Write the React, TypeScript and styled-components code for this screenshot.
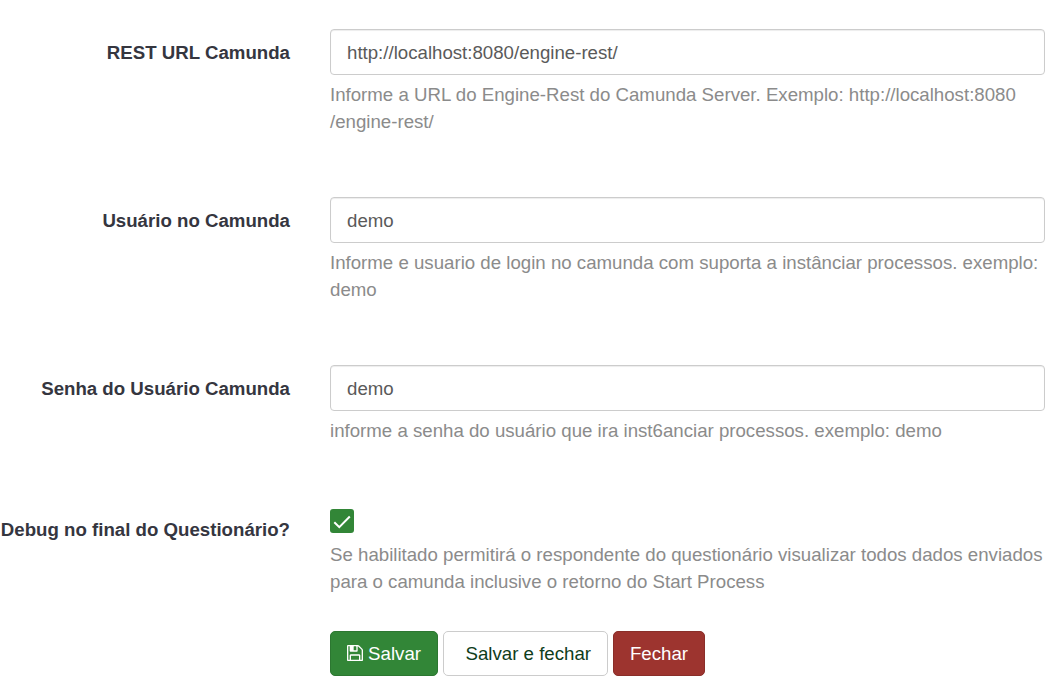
import React from "react";
import styled, { createGlobalStyle } from "styled-components";

const GlobalStyle = createGlobalStyle`
  * { box-sizing: border-box; }
  body {
    margin: 0;
    background: #fff;
    overflow: hidden;
    font-family: "Liberation Sans", Arial, sans-serif;
    font-size: 18.67px;
    line-height: 27px;
  }
`;

const Form = styled.form`
  width: 1055px;
  height: 683px;
  padding: 29px 10px 0 0;
`;

const Row = styled.div<{ $height: number }>`
  display: grid;
  grid-template-columns: 290px 715px;
  column-gap: 40px;
  height: ${(p) => p.$height}px;
  align-items: start;
`;

const Label = styled.label<{ $top?: number }>`
  padding-top: ${(p) => p.$top ?? 10}px;
  font-weight: 700;
  color: #35363f;
  text-align: right;
  white-space: nowrap;
`;

const Input = styled.input`
  display: block;
  width: 100%;
  height: 46px;
  padding: 9px 16px 7px;
  border: 1px solid #ccc;
  border-radius: 4px;
  box-shadow: inset 0 1px 1px rgba(0, 0, 0, 0.075);
  background: #fff;
  color: #5a5a5a;
  font: inherit;
  outline: none;
`;

const Help = styled.p`
  margin: 6px 0 0;
  color: #8b8b8b;
  white-space: nowrap;
`;

const CheckBox = styled.span`
  display: flex;
  width: 24px;
  height: 24px;
  margin-bottom: 8px;
  border-radius: 3px;
  background: #328637;
`;

const Actions = styled.div`
  display: flex;
  gap: 5px;
  padding-left: 330px;
`;

const variants = {
  primary: "background: #328637; border-color: #2c7731; color: #fff;",
  plain: "background: #fff; border-color: #ccc; color: #0f3d1b;",
  danger: "background: #9d342f; border-color: #8a2e29; color: #fff;",
};

const Button = styled.button<{ $variant: keyof typeof variants; $width: number }>`
  display: flex;
  align-items: center;
  justify-content: flex-end;
  width: ${(p) => p.$width}px;
  height: 45px;
  padding: 0 16px;
  border: 1px solid;
  border-radius: 5px;
  font: inherit;
  white-space: nowrap;
  ${(p) => variants[p.$variant]}
`;

const SaveIcon = styled.svg`
  flex: none;
  width: 16px;
  height: 16px;
  margin: 0 5px 1px 0;
`;

const fields = [
  {
    label: "REST URL Camunda",
    value: "http://localhost:8080/engine-rest/",
    help: ["Informe a URL do Engine-Rest do Camunda Server. Exemplo: http://localhost:8080", "/engine-rest/"],
    height: 168,
  },
  {
    label: "Usuário no Camunda",
    value: "demo",
    help: ["Informe e usuario de login no camunda com suporta a instânciar processos. exemplo:", "demo"],
    height: 168,
  },
  {
    label: "Senha do Usuário Camunda",
    value: "demo",
    help: ["informe a senha do usuário que ira inst6anciar processos. exemplo: demo"],
    height: 144,
  },
];

function HelpText({ lines }: { lines: string[] }) {
  return (
    <Help>
      {lines.map((line, i) => (
        <React.Fragment key={line}>
          {i > 0 && <br />}
          {line}
        </React.Fragment>
      ))}
    </Help>
  );
}

export default function App() {
  return (
    <Form onSubmit={(e) => e.preventDefault()}>
      <GlobalStyle />
      {fields.map((f) => (
        <Row key={f.label} $height={f.height}>
          <Label>{f.label}</Label>
          <div>
            <Input defaultValue={f.value} />
            <HelpText lines={f.help} />
          </div>
        </Row>
      ))}
      <Row $height={122}>
        <Label $top={7}>Debug no final do Questionário?</Label>
        <div>
          <CheckBox role="checkbox" aria-checked="true">
            <svg width="24" height="24" viewBox="0 0 24 24" fill="none" stroke="#fff" strokeWidth="2">
              <path d="M4.3 13.2l5 5L19.8 7.5" />
            </svg>
          </CheckBox>
          <HelpText
            lines={[
              "Se habilitado permitirá o respondente do questionário visualizar todos dados enviados",
              "para o camunda inclusive o retorno do Start Process",
            ]}
          />
        </div>
      </Row>
      <Actions>
        <Button $variant="primary" $width={108}>
          <SaveIcon viewBox="0 128 1536 1536" fill="#fff">
            <path d="M384 1536h768v-384h-768v384zM1280 1536h128v-896q0-14-10-38.5t-20-34.5l-281-281q-10-10-34-20t-39-10v416q0 40-28 68t-68 28h-576q-40 0-68-28t-28-68v-416h-128v1280h128v-416q0-40 28-68t68-28h832q40 0 68 28t28 68v416zM896 608v-320q0-13-9.5-22.5t-22.5-9.5h-192q-13 0-22.5 9.5t-9.5 22.5v320q0 13 9.5 22.5t22.5 9.5h192q13 0 22.5-9.5t9.5-22.5zM1536 640v928q0 40-28 68t-68 28h-1344q-40 0-68-28t-28-68v-1344q0-40 28-68t68-28h928q40 0 88 20t76 48l280 280q28 28 48 76t20 88z" />
          </SaveIcon>
          Salvar
        </Button>
        <Button $variant="plain" $width={165}>Salvar e fechar</Button>
        <Button $variant="danger" $width={92}>Fechar</Button>
      </Actions>
    </Form>
  );
}
